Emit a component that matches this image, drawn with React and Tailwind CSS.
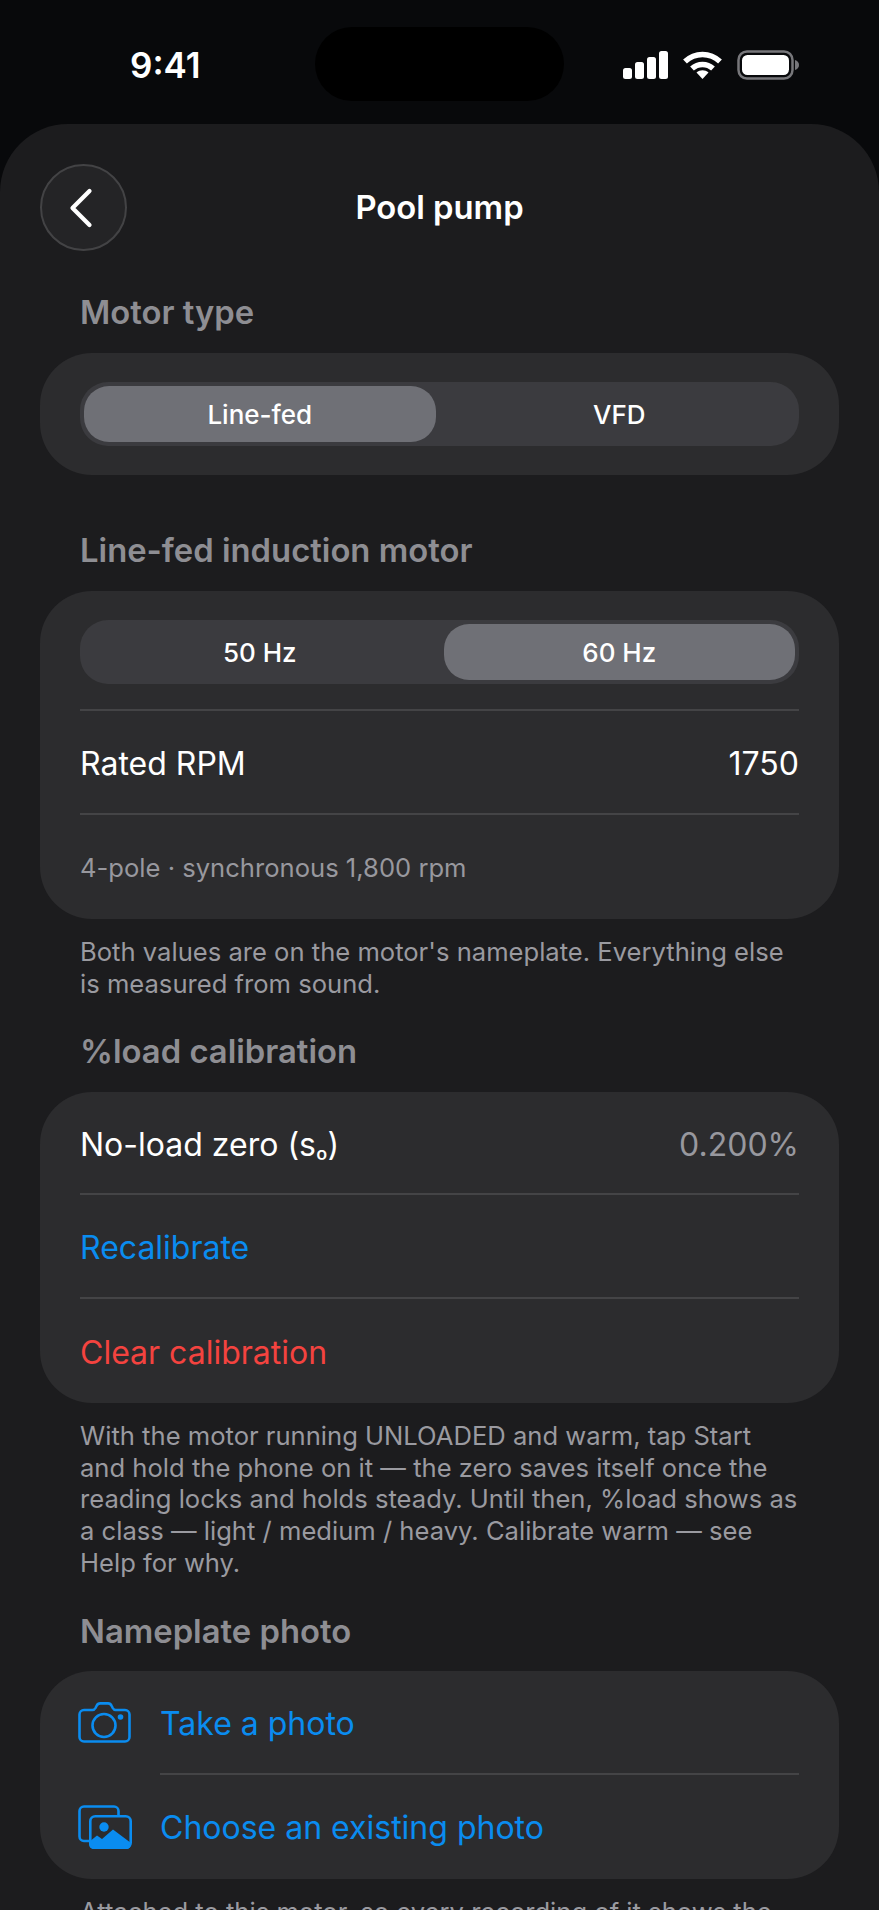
import React from 'react';
import { ChevronLeft } from 'lucide-react';

const SectionLabel = ({ children, className = '' }) => (
  <h2 className={`h-[40px] flex items-center pl-[40px] mb-[20px] text-[32.8px] font-semibold text-[#8e8e93] ${className}`}>
    {children}
  </h2>
);

const Note = ({ children, className = '' }) => (
  <p className={`px-[40px] mt-[17px] text-[25.6px] leading-[31.6px] text-[#9a9aa0] ${className}`}>{children}</p>
);

const Segmented = ({ options, active }) => (
  <div className="h-[64px] rounded-[28px] bg-[#3b3b3f] p-[4px] flex gap-[8px]">
    {options.map((o, i) => (
      <div
        key={o}
        className={`flex-1 flex items-center justify-center rounded-[25px] text-[26px] font-[450] text-white ${i === active ? 'bg-[#6f7076]' : ''}`}
      >
        {o}
      </div>
    ))}
  </div>
);

const Row = ({ children, className = '', border = true }) => (
  <div className={`flex items-center justify-between pt-[4px] text-[32px] ${border ? 'border-b-[2px] border-[#444446]' : ''} ${className}`}>
    {children}
  </div>
);

const SignalIcon = () => (
  <svg width="45" height="28" viewBox="0 0 45 28" fill="#fff">
    <rect x="0" y="17" width="9" height="11" rx="2.5" />
    <rect x="12" y="11" width="9" height="17" rx="2.5" />
    <rect x="24" y="6" width="9" height="22" rx="2.5" />
    <rect x="36" y="0" width="9" height="28" rx="2.5" />
  </svg>
);

const WifiIcon = () => (
  <svg width="39" height="28" viewBox="0 0 39 28" fill="none" stroke="#fff" strokeWidth="5.5">
    <path d="M2 10.5C12 1 27 1 37 10.5" />
    <path d="M9 17.5C15 12 24 12 30 17.5" />
    <path d="M19.5 28L13.5 21.5C17 18.5 22 18.5 25.5 21.5Z" fill="#fff" stroke="none" />
  </svg>
);

const BatteryIcon = () => (
  <svg width="62" height="30" viewBox="0 0 62 30">
    <rect x="1.5" y="1.5" width="54" height="27" rx="8.5" fill="none" stroke="#77777b" strokeWidth="2.5" />
    <rect x="5" y="5" width="47" height="20" rx="5.5" fill="#fff" />
    <path d="M58 10c2.6.8 4 2.6 4 5s-1.4 4.2-4 5z" fill="#77777b" />
  </svg>
);

const CameraIcon = () => (
  <svg width="53" height="41" viewBox="0 0 53 41" fill="none" stroke="#0a8cf0" strokeWidth="2.6" strokeLinejoin="round">
    <path d="M6 8h8.500c1.500 0 2.300-.7 3-2l1-2c.7-1.400 1.600-2.600 3.600-2.600h8c2 0 3 1.200 3.600 2.600l1 2c.7 1.300 1.500 2 3 2H47c2.500 0 4.500 2 4.500 4.500V35c0 2.500-2 4.500-4.500 4.500H6c-2.500 0-4.500-2-4.500-4.500V12.500C1.500 10 3.500 8 6 8z" />
    <circle cx="26" cy="23.500" r="11.500" />
    <circle cx="42.500" cy="15" r="2.800" fill="#0a8cf0" stroke="none" />
  </svg>
);

const GalleryIcon = () => (
  <svg width="54" height="44" viewBox="0 0 54 44" fill="none">
    <path d="M11 36H6c-2.500 0-4.500-2-4.500-4.500V6C1.500 3.500 3.500 1.500 6 1.500h30c2.500 0 4.500 2 4.500 4.500v4" stroke="#0a8cf0" strokeWidth="2.600" />
    <rect x="12.300" y="11.300" width="40.400" height="31.400" rx="5" stroke="#0a8cf0" strokeWidth="2.600" />
    <circle cx="26" cy="22" r="4.700" fill="#0a8cf0" />
    <path d="M11 37l8-6.500 5 3.500 11-9.500 18 13.500V39c0 3-2 5-5 5H16c-3 0-5-2-5-5z" fill="#0a8cf0" />
  </svg>
);

export default function App() {
  return (
    <div className="h-[1910px] overflow-hidden bg-[#08090b] text-white font-['Inter',sans-serif]">
      <div className="h-[124px] flex items-start">
        <div className="pl-[130px] w-[315px] pt-[44px] text-[35px] leading-[42px] font-semibold">9:41</div>
        <div className="mt-[27px] w-[249px] h-[74px] rounded-[37px] bg-black" />
        <div className="ml-[59px] mt-[50px] flex items-center gap-[15px]">
          <SignalIcon />
          <WifiIcon />
          <BatteryIcon />
        </div>
      </div>

      <div className="h-[1786px] rounded-t-[68px] bg-[#1c1c1e] pt-[40px] px-[40px]">
        <header className="grid grid-cols-[87px_1fr_87px] items-center h-[87px]">
          <button className="w-[87px] h-[87px] rounded-full bg-[#242426] border-[2px] border-[#434345] flex items-center justify-center">
            <ChevronLeft size={68} strokeWidth={1.5} className="text-white -ml-[6px] shrink-0" />
          </button>
          <h1 className="text-center text-[32.8px] font-semibold pt-[1px]">Pool pump</h1>
        </header>

        <SectionLabel className="mt-[42px]">Motor type</SectionLabel>
        <div className="rounded-[52px] bg-[#2c2c2e] px-[40px] py-[29px]">
          <Segmented options={['Line-fed', 'VFD']} active={0} />
        </div>

        <SectionLabel className="mt-[56px]">Line-fed induction motor</SectionLabel>
        <div className="rounded-[52px] bg-[#2c2c2e] px-[40px] pt-[29px]">
          <Segmented options={['50 Hz', '60 Hz']} active={1} />
          <div className="mt-[25px] border-b-[2px] border-[#444446]" />
          <Row className="h-[104px]">
            <span>Rated RPM</span>
            <span>1750</span>
          </Row>
          <div className="h-[104px] pt-[2px] flex items-center text-[25.6px] text-[#98989e]">4-pole · synchronous 1,800 rpm</div>
        </div>
        <Note>Both values are on the motor's nameplate. Everything else is measured from sound.</Note>

        <SectionLabel className="mt-[32px] !mb-[21px]">%load calibration</SectionLabel>
        <div className="rounded-[52px] bg-[#2c2c2e] px-[40px]">
          <Row className="h-[103px]">
            <span>No-load zero (s<span className="text-[25px]">₀</span>)</span>
            <span className="text-[#98989e]">0.200%</span>
          </Row>
          <Row className="h-[104px] text-[#0a8cf0]">Recalibrate</Row>
          <Row border={false} className="h-[104px] text-[#f4433f]">Clear calibration</Row>
        </div>
        <Note>
          With the motor running UNLOADED and warm, tap Start and hold the phone on it — the zero saves itself once the
          reading locks and holds steady. Until then, %load shows as a class — light / medium / heavy. Calibrate warm — see
          Help for why.
        </Note>

        <SectionLabel className="mt-[33px]">Nameplate photo</SectionLabel>
        <div className="rounded-[52px] bg-[#2c2c2e] pl-[38px] pr-[40px]">
          <div className="h-[102px] flex items-center gap-[29px] text-[32px] text-[#0a8cf0]">
            <CameraIcon />
            <span className="pt-[4px]">Take a photo</span>
          </div>
          <div className="ml-[82px] border-b-[2px] border-[#444446]" />
          <div className="h-[104px] flex items-center gap-[28px] text-[32px] text-[#0a8cf0]">
            <GalleryIcon />
            <span className="pt-[2px]">Choose an existing photo</span>
          </div>
        </div>
        <Note>Attached to this motor, so every recording of it shows the nameplate it was measured against.</Note>
      </div>
    </div>
  );
}
